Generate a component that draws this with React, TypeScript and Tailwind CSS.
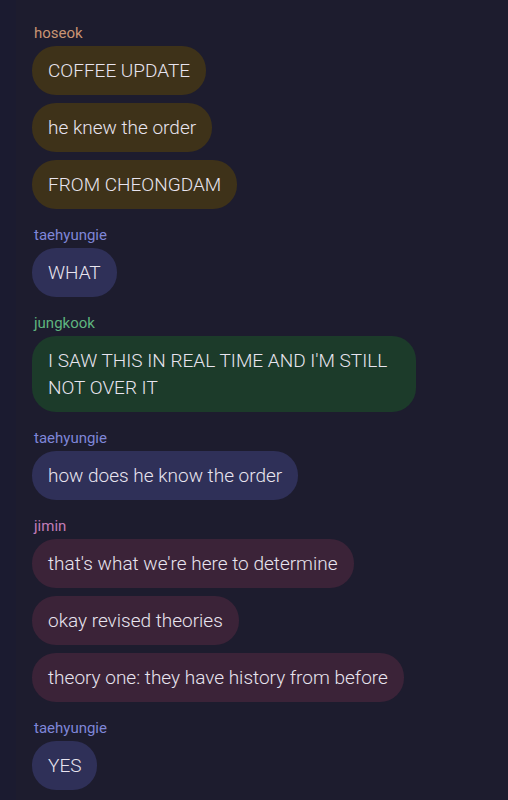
const groups = [
  {
    name: "hoseok",
    nameColor: "text-[#c99473]",
    bubble: "bg-[#3e3219]",
    messages: ["COFFEE UPDATE", "he knew the order", "FROM CHEONGDAM"],
  },
  {
    name: "taehyungie",
    nameColor: "text-[#7f86d8]",
    bubble: "bg-[#2f3058]",
    messages: ["WHAT"],
  },
  {
    name: "jungkook",
    nameColor: "text-[#5fb47e]",
    bubble: "bg-[#1c3b2a]",
    messages: ["I SAW THIS IN REAL TIME AND I'M STILL NOT OVER IT"],
  },
  {
    name: "taehyungie",
    nameColor: "text-[#7f86d8]",
    bubble: "bg-[#2f3058]",
    messages: ["how does he know the order"],
  },
  {
    name: "jimin",
    nameColor: "text-[#c27db8]",
    bubble: "bg-[#3b2338]",
    messages: [
      "that's what we're here to determine",
      "okay revised theories",
      "theory one: they have history from before",
    ],
  },
  {
    name: "taehyungie",
    nameColor: "text-[#7f86d8]",
    bubble: "bg-[#2f3058]",
    messages: ["YES"],
  },
]

export default function App() {
  return (
    <div className="flex h-[800px] w-[508px] overflow-hidden bg-[#1d1c2e] font-['Roboto',sans-serif]">
      <div className="w-4 shrink-0 bg-[#1b1b30]" />
      <div className="flex flex-1 flex-col gap-[17px] pl-4 pt-[24px]">
        {groups.map((group, i) => (
          <div key={i} className="flex flex-col items-start">
            <div className={`mb-1 pl-0.5 text-[15px] leading-[18px] ${group.nameColor}`}>{group.name}</div>
            <div className="flex flex-col items-start gap-2">
              {group.messages.map((text, j) => (
                <div
                  key={j}
                  className={`max-w-[384px] rounded-[24px] px-4 py-[11px] text-[19px] font-light leading-[27px] text-[#e8e4ef] ${group.bubble}`}
                >
                  {text}
                </div>
              ))}
            </div>
          </div>
        ))}
      </div>
    </div>
  )
}
